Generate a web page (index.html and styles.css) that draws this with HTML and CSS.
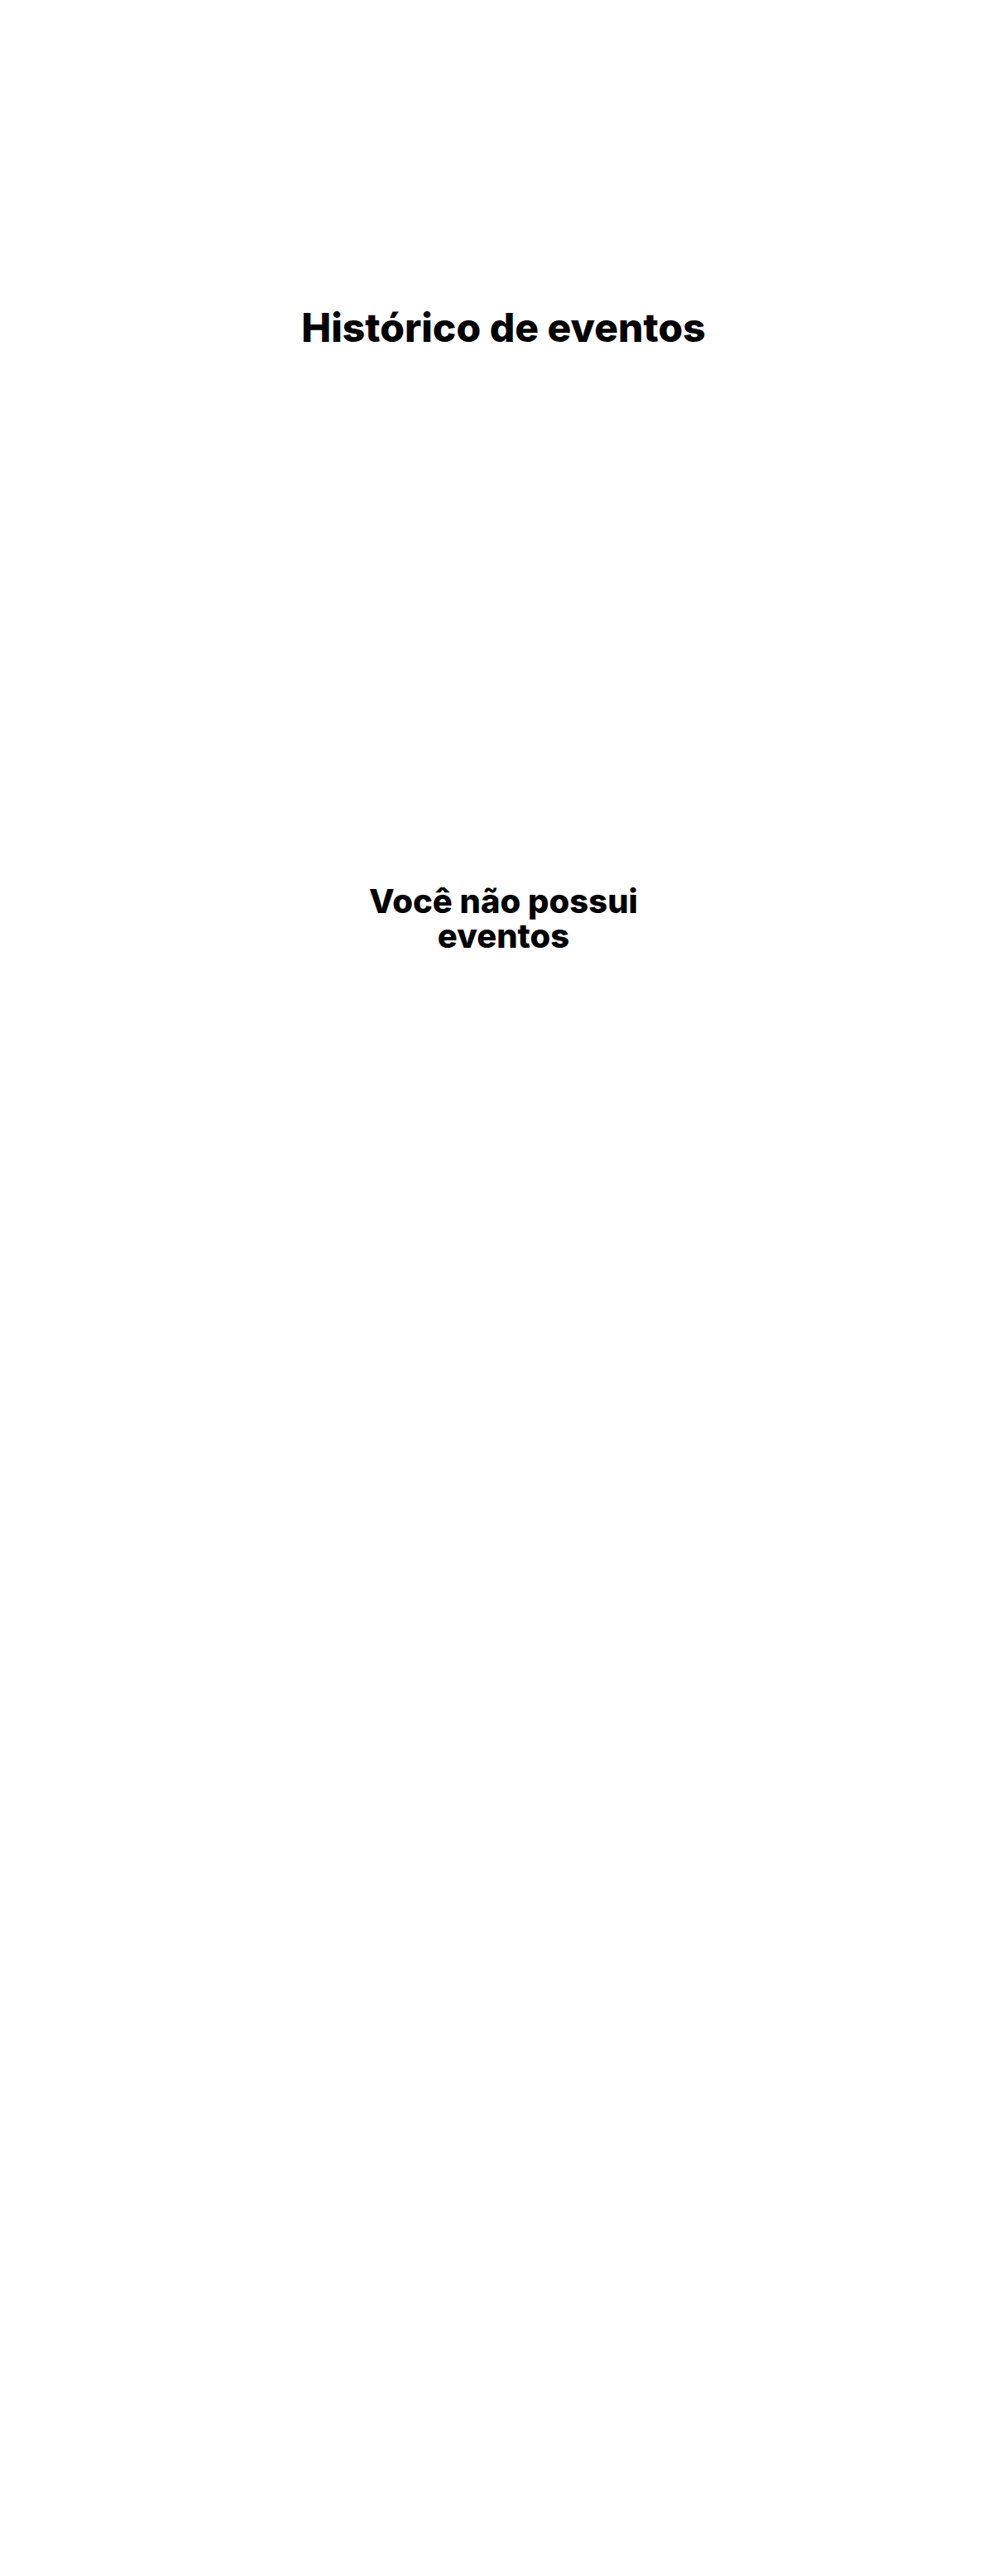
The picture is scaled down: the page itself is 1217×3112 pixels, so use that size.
FILE: index.html
```html
<!DOCTYPE html>
<html lang="pt-BR">
<head>
<meta charset="utf-8">
<title>Histórico de eventos</title>
<link rel="stylesheet" href="styles.css">
</head>
<body>
<main class="page">
  <section class="header">
    <h1 class="title">Histórico de eventos</h1>
  </section>
  <section class="empty">
    <h2 class="empty-title">Você não possui eventos</h2>
  </section>
</main>
</body>
</html>
```

FILE: styles.css
```css
html, body {
  margin: 0;
  padding: 0;
}
body {
  background: #ffffff;
  font-family: Inter, "Noto Sans", sans-serif;
  color: #000;
}
.page {
  min-height: 3112px;
  display: flex;
  flex-direction: column;
  align-items: center;
}
.header {
  padding-top: 367px;
}
.title {
  margin: 0;
  font-size: 48px;
  font-weight: 800;
  line-height: 58px;
  text-align: center;
}
.empty {
  padding-top: 643px;
  width: 400px;
}
.empty-title {
  margin: 0;
  font-size: 40px;
  font-weight: 800;
  line-height: 42px;
  text-align: center;
}
```
